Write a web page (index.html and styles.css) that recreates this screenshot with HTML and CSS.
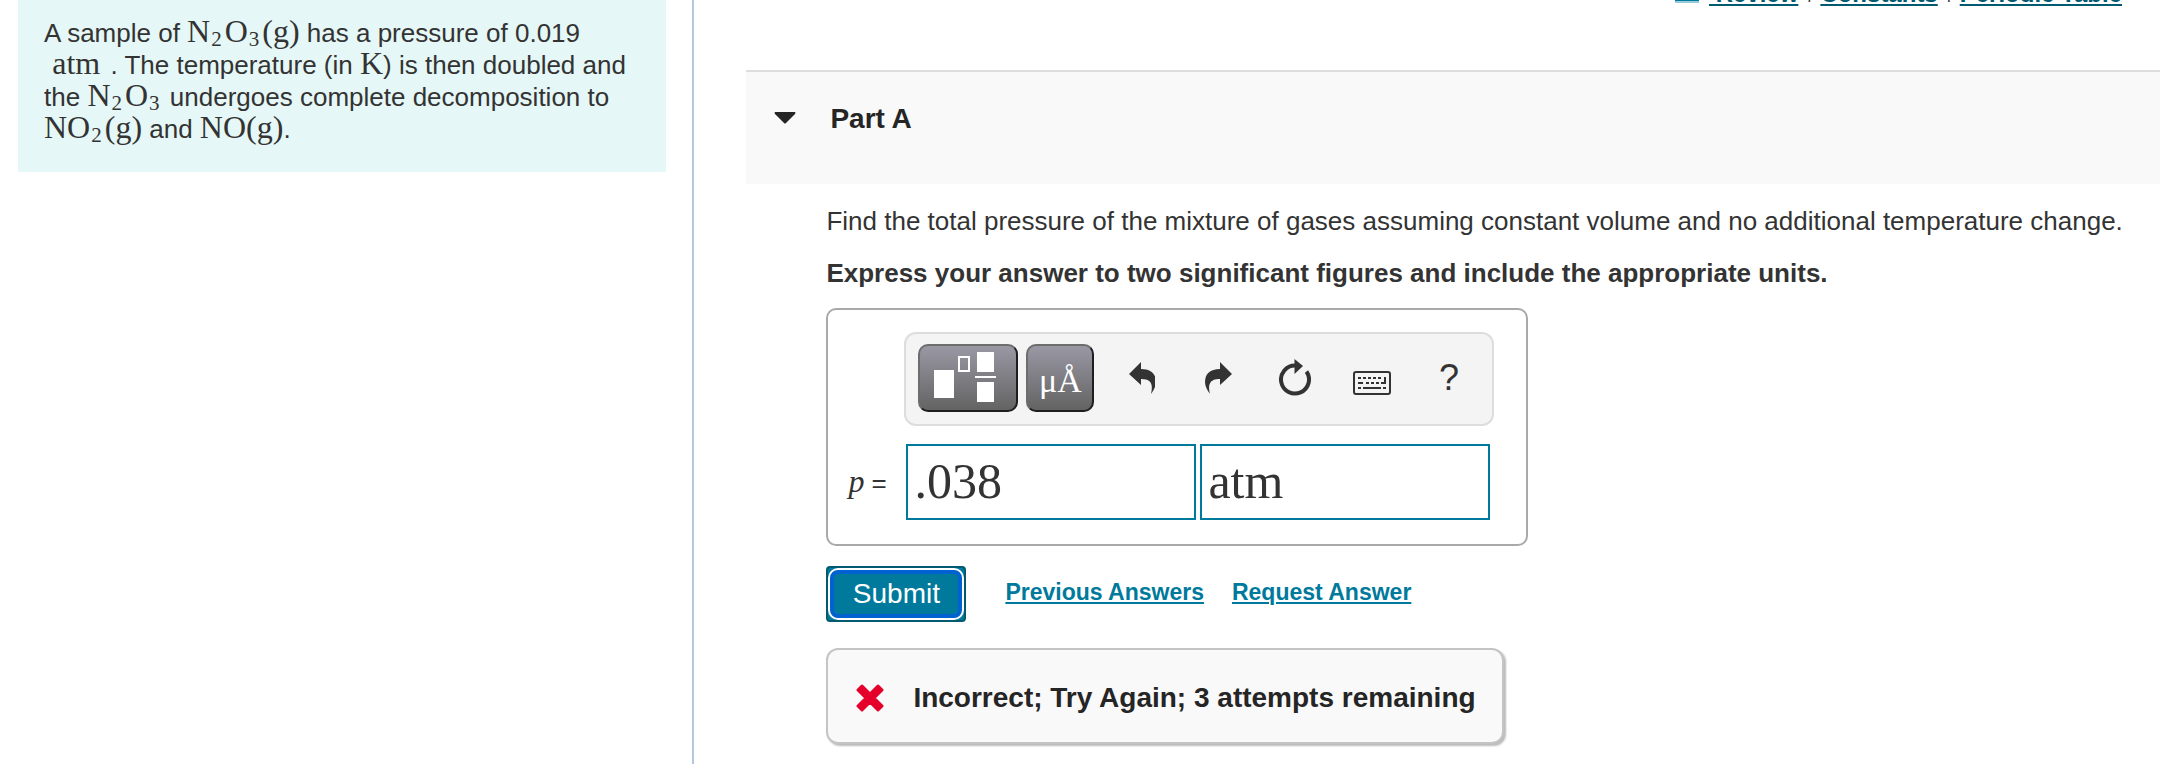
FILE: index.html
```html
<!DOCTYPE html>
<html lang="en">
<head>
    <meta charset="UTF-8">
    <meta name="viewport" content="width=device-width, initial-scale=1.0">
    <title>Part A</title>
    <link rel="stylesheet" href="styles.css">
</head>
<body>
    <div class="page">
        <aside class="side">
            <p class="intro">A sample of <span class="math">N<sub>2</sub>O<sub>3</sub>(g)</span> has a pressure of 0.019 &nbsp;<span class="math unit">atm</span>&nbsp;. The temperature (in <span class="math">K</span>) is then doubled and the <span class="math">N<sub>2</sub>O<sub>3</sub></span> undergoes complete decomposition to <span class="math">NO<sub>2</sub>(g)</span> and <span class="math">NO(g)</span>.</p>
        </aside>
        <main class="main">
            <nav class="top_links">
                <svg class="book" viewBox="0 0 24 20"><path d="M0 2h24v16H0z"/><path d="M0 18h24v2H0z" opacity=".4"/></svg>
                <a href="#">&nbsp;Review</a>
                <span>|</span>
                <a href="#">Constants</a>
                <span>|</span>
                <a href="#">Periodic Table</a>
            </nav>
            <header class="part_head">
                <svg class="caret" viewBox="0 0 22 12"><path d="M1 0h20q1 1 0 2L12 11q-1 1-2 0L1 2Q0 1 1 0z"/></svg>
                <h2>Part A</h2>
            </header>
            <section class="part_body">
                <p>Find the total pressure of the mixture of gases assuming constant volume and no additional temperature change.</p>
                <p class="hint">Express your answer to two significant figures and include the appropriate units.</p>

                <form class="answer">
                    <div class="toolbar">
                        <button type="button" class="key key_wide" aria-label="Templates">
                            <svg viewBox="0 0 68 56" width="68" height="56">
                                <path fill="#fff" d="M0 20h20v28H0zM43 2h17v20H43zM43 32h17v20H43zM41 26h21v2H41z"/>
                                <path fill="none" stroke="#fff" stroke-width="2" d="M25 7h10v14H25z"/>
                            </svg>
                        </button>
                        <button type="button" class="key key_unit" aria-label="Units">μÅ</button>
                        <div class="tools">
                            <button type="button" aria-label="Undo">
                                <svg viewBox="-2 0 28 32" width="28" height="32"><path d="M0 12L12 0v7C22 7 27 12 27 20c0 4-2 8-5 12 2-9 1-15-10-15v6z"/></svg>
                            </button>
                            <button type="button" aria-label="Redo">
                                <svg viewBox="-1 0 29 32" width="29" height="32"><path d="M28 12L16 0v7C6 7 1 12 1 20c0 4 2 8 5 12-2-9-1-15 10-15v6z"/></svg>
                            </button>
                            <button type="button" aria-label="Reset">
                                <svg viewBox="0 0 32 38" width="32" height="38">
                                    <path fill="none" stroke="#333" stroke-width="4" d="M16 6.500A14 14 0 1 0 27.500 12.500"/>
                                    <path d="M15.500 0l8.500 7-8.500 8z"/>
                                </svg>
                            </button>
                            <button type="button" class="keyboard" aria-label="Keyboard">
                                <svg viewBox="0 0 38 24" width="38" height="24">
                                    <rect x="1" y="1" width="36" height="22" rx="2" fill="none" stroke="#333" stroke-width="2"/>
                                    <path d="M5 6h3v2H5zM10 6h3v2h-3zM15 6h3v2h-3zM20 6h3v2h-3zM25 6h3v2h-3zM31 6h2v7h-5v-2h3zM5 11h5v2H5zM13 11h3v2h-3zM18 11h3v2h-3zM23 11h3v2h-3zM5 16h3v2H5zM10 16h18v2H10zM30 16h3v2h-3z"/>
                                </svg>
                            </button>
                            <button type="button" class="help" aria-label="Help">?</button>
                        </div>
                    </div>
                    <div class="fields">
                        <label for="value"><i>p</i> =</label>
                        <input type="text" id="value" value=".038">
                        <input type="text" id="units" value="atm" aria-label="Units">
                    </div>
                </form>

                <div class="actions">
                    <button type="button" class="submit"><span>Submit</span></button>
                    <a href="#">Previous Answers</a>
                    <a href="#">Request Answer</a>
                </div>

                <div class="feedback">
                    <svg viewBox="0 0 28 28" width="28" height="28"><path d="M6 2l8 8 8-8 4 4-8 8 8 8-4 4-8-8-8 8-4-4 8-8-8-8z" fill="#e4002b" stroke="#e4002b" stroke-width="3" stroke-linejoin="round"/></svg>
                    <strong>Incorrect; Try Again; 3 attempts remaining</strong>
                </div>
            </section>
        </main>
    </div>
</body>
</html>
```

FILE: styles.css
```css
*{margin:0; padding:0; box-sizing:border-box;}
body{font:26px/32px "Liberation Sans", Arial, sans-serif; color:#333; background:#fff;}
button,input{font-family:inherit; color:inherit;}
svg{display:block; flex:none; fill:#333;}
.page{display:flex; min-height:100vh; overflow:hidden;}

/* left column */
.side{width:32%; padding:0 26px 0 18px; border-right:2px solid #b3c8dc;}
.intro{padding:17px 8px 27px 26px; background:#e5f7f6;}
.math{font-family:"Liberation Serif", serif; font-size:32px; line-height:0;}
.unit{padding:0 3px 0 1px;}
.math sub{margin:0 3px 0 1px; font-size:21px; line-height:0; vertical-align:-4px;}

/* right column */
.main{flex:1; padding:0 10px 0 52px;}
.top_links{display:flex; justify-content:flex-end; height:32px; margin-top:-22px; padding-right:38px; font-size:24px; line-height:32px;}
.top_links a{color:#005a70; font-weight:bold; text-decoration-thickness:2px; text-underline-offset:2px;}
.top_links span{width:22px; font-size:18px; line-height:28px; text-align:center;}
.top_links .book{width:24px; height:20px; margin:5px 10px 0 0; fill:#007a9c;}
.part_head{display:flex; height:114px; margin-top:60px; padding:31px 28px; border-top:2px solid #ddd; background:#f9f9f9; color:#252525;}
.part_head h2{font-size:28px; line-height:32px;}
.caret{width:22px; height:12px; margin:9px 34px 0 0; fill:#252525;}
.part_body{padding:21px 28px 20px 80px;}
.part_body .hint{margin-top:20px; font-weight:bold;}

.answer{width:702px; margin-top:19px; padding:22px 32px 24px 18px; border:2px solid #a9a9a9; border-radius:10px;}
.toolbar{display:flex; align-items:center; gap:8px; height:94px; margin-left:58px; padding:0 0 2px 12px; border:2px solid #ddd; border-radius:12px; background:#f4f4f4;}
.key{display:flex; align-items:center; justify-content:center; height:68px; border:2px solid; border-color:#6d6d6d #1e1e1e #1e1e1e #6d6d6d; border-radius:10px; background:linear-gradient(#9a98a4,#636363);}
.key_wide{width:100px;}
.key_unit{width:68px; padding-top:6px; color:#fff; font:34px/40px "Liberation Serif", serif;}
.tools{display:flex; flex:1;}
.tools button{display:flex; align-items:center; justify-content:center; width:77px; height:68px; border:0; background:none;}
.tools .keyboard{padding-top:10px;}
.tools .help{font-size:36px;}
.fields{display:flex; align-items:center; gap:4px; margin-top:18px;}
.fields label{width:56px; padding-left:2px; white-space:nowrap;}
.fields label i{font-family:"Liberation Serif", serif; font-size:32px; line-height:32px;}
.fields input{width:290px; height:76px; padding:0 6px 2px; border:2px solid #007a9c; background:#fff; font:50px "Liberation Serif", serif;}

.actions{display:flex; align-items:center; margin-top:20px;}
.actions a{margin-right:28px; padding-bottom:4px; color:#007a9c; font-size:23px; font-weight:bold; text-decoration-thickness:2px; text-underline-offset:2px;}
.submit{width:140px; height:56px; margin-right:39px; border:2px solid #005a70; border-radius:4px; background:#007a9c; color:#fff; font-size:28px;}
.submit span{display:flex; align-items:center; justify-content:center; height:48px; margin:2px; border:4px solid #0061d0; border-radius:8px; background:#007a9c; box-shadow:0 0 0 2px #fff;}

.feedback{display:inline-flex; align-items:center; gap:29px; height:96px; margin-top:26px; padding:4px 26px 0 28px; border:2px solid #c4c4c4; border-radius:12px; background:#f9f9f9; box-shadow:2px 2px 2px #bbb; color:#252525; font-size:28px;}
```
